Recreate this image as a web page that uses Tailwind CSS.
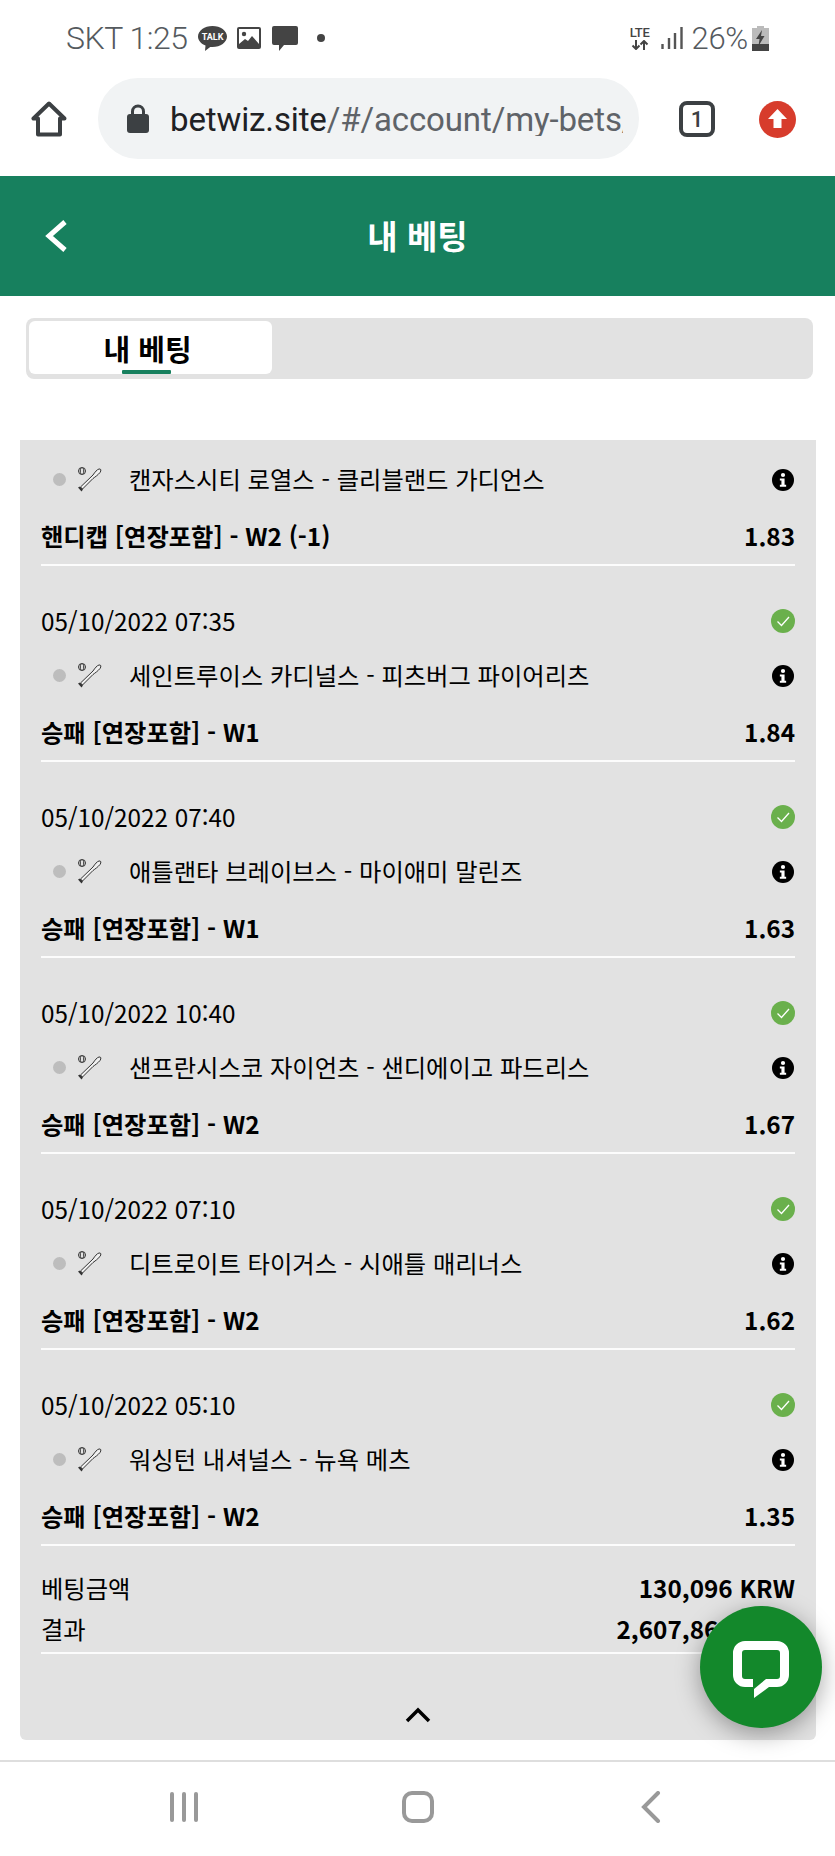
<!DOCTYPE html>
<html lang="ko">
<head>
  <meta charset="UTF-8" />
  <meta name="viewport" content="width=device-width, initial-scale=1.0" />
  <title>내 베팅</title>
  <script src="https://cdn.jsdelivr.net/npm/@tailwindcss/browser@4"></script>
</head>
<body class="relative w-[835px] h-[1856px] overflow-hidden bg-white text-black font-['Noto_Sans_CJK_KR',sans-serif]">

  <!-- status bar -->
  <div class="h-[78px] flex items-center pl-[66px] pr-[66px] pb-[2px] text-[#555a5e] font-['Roboto',sans-serif]">
    <span class="text-[32px] leading-none font-light tracking-[-0.5px] w-[132px]">SKT 1:25</span>
    <svg class="w-[29px] h-[25px]" viewBox="0 0 29 25"><path fill="#444" d="M14.500 0C22.500 0 29 4.700 29 10.500S22.500 21 14.500 21c-.8 0-1.500 0-2.300-.1L7 25l.5-5.400C3 17.800 0 14.400 0 10.500 0 4.700 6.500 0 14.500 0z"/><text x="14.500" y="14" text-anchor="middle" font-size="9" font-weight="700" fill="#fff" font-family="Roboto">TALK</text></svg>
    <svg class="w-[24px] h-[22px] ml-[10px]" viewBox="0 0 24 22"><rect width="24" height="22" rx="2" fill="#444"/><rect x="2" y="2" width="20" height="15" fill="#fff"/><circle cx="7" cy="7" r="2.200" fill="#444"/><path fill="#444" d="M2 17l6-5 3 2 4-5 7 8z"/></svg>
    <svg class="w-[26px] h-[25px] ml-[11px]" viewBox="0 0 26 25"><path fill="#444" d="M2 0h22a2 2 0 0 1 2 2v15a2 2 0 0 1-2 2H12l-5 6v-6H2a2 2 0 0 1-2-2V2a2 2 0 0 1 2-2z"/></svg>
    <span class="w-[8px] h-[8px] rounded-full bg-[#444] ml-[19px]"></span>
    <div class="ml-auto flex items-center">
      <div class="w-[24px] h-[24px] flex flex-col items-center justify-between text-[#444]">
        <span class="text-[13px] leading-[13px] font-medium tracking-[-0.3px]">LTE</span>
        <svg class="w-[18px] h-[10px]" viewBox="0 0 18 10"><path fill="none" stroke="#444" stroke-width="2" d="M5 0v9M1.500 5.500L5 9l3.500-3.500M13 10V1M9.500 4.500L13 1l3.500 3.500"/></svg>
      </div>
      <svg class="w-[22px] h-[22px] ml-[9px]" viewBox="0 0 22 22"><path stroke="#555" stroke-width="2.400" d="M1.500 17v5M8 11v11M14 6v16M20.500 0v22"/></svg>
      <span class="text-[31px] leading-none font-light ml-[9px] tracking-[-0.3px]">26%</span>
      <svg class="w-[17px] h-[25px] ml-[4px]" viewBox="0 0 17 25"><path fill="#bbb" d="M5 0h7v2h5v16H0V2h5z"/><rect y="18" width="17" height="7" fill="#444"/><path fill="#444" d="M10 4L4 13h3.500l-1 7 6-10H9z"/></svg>
    </div>
  </div>

  <!-- browser address bar -->
  <div class="h-[98px] flex items-start">
    <svg class="w-[36px] h-[36px] ml-[31px] mt-[23px]" viewBox="0 0 36 36"><path fill="none" stroke="#3c4043" stroke-width="4" d="M18 2.500L2.500 17.500H7V33.500H29V17.500H33.500z" stroke-linejoin="round"/></svg>
    <div class="ml-[31px] w-[541px] h-[81px] rounded-[40px] bg-[#f1f3f4] flex items-center pl-[29px] overflow-hidden">
      <svg class="w-[22px] h-[29px] shrink-0" viewBox="0 0 22 29"><path fill="none" stroke="#3c4043" stroke-width="3" d="M5.500 12V7.500a5.500 5.500 0 0 1 11 0V12"/><rect y="10" width="22" height="19" rx="3" fill="#3c4043"/></svg>
      <div class="ml-[21px] w-[453px] overflow-hidden whitespace-nowrap text-[33px] leading-none tracking-[-0.12px] font-['Roboto',sans-serif] text-[#5f6368] pt-[2px]"><span class="text-[#202124]">betwiz.site</span>/#/account/my-bets/</div>
    </div>
    <div class="ml-[40px] mt-[23px] w-[36px] h-[36px] rounded-[8px] border-[4px] border-[#3c4043] flex items-center justify-center text-[22px] font-medium font-['Roboto',sans-serif] text-[#3c4043]">1</div>
    <svg class="w-[37px] h-[37px] ml-[44px] mt-[23px]" viewBox="0 0 37 37"><circle cx="18.500" cy="18.500" r="18.500" fill="#d73c2c"/><path fill="#fff" d="M18.500 8L28 18h-5.500v9h-8v-9H9z"/></svg>
  </div>

  <!-- page header -->
  <header class="h-[120px] bg-[#17805e] relative flex items-center justify-center">
    <svg class="absolute left-[43px] top-[42px] w-[26px] h-[36px]" viewBox="0 0 26 36"><path fill="none" stroke="#fff" stroke-width="5" d="M22 4L6 18l16 14"/></svg>
    <h1 class="text-[33px] font-bold text-white">내 베팅</h1>
  </header>

  <!-- tabs -->
  <div class="mt-[22px] mx-[26px] w-[787px] h-[61px] rounded-[8px] bg-[#e2e2e2] p-[3px] pb-[5px]">
    <div class="relative w-[243px] h-[53px] rounded-[6px] bg-white flex items-center justify-center pr-[6px] pt-[2px] text-[29px] font-bold">
      내 베팅
      <span class="absolute bottom-0 left-[93px] w-[49px] h-[4px] rounded-[1px] bg-[#17805e]"></span>
    </div>
  </div>

  <!-- bet card -->
  <div id="bet-card" class="mt-[61px] mx-[20px] w-[796px] h-[1300px] rounded-b-[6px] bg-[#e2e2e2] px-[21px] pt-[5px] text-[24.300px]">
    <div id="bet-rows"></div>
    <div class="pt-[22px] h-[108px] border-b-2 border-white/90">
      <div class="h-[41px] flex items-center justify-between"><span>베팅금액</span><b class="font-bold">130,096 KRW</b></div>
      <div class="h-[41px] flex items-center justify-between"><span>결과</span><b class="font-bold">2,607,862 KRW</b></div>
    </div>
    <div class="flex justify-center pt-[53px]">
      <svg class="w-[26px] h-[16px]" viewBox="0 0 26 16"><path fill="none" stroke="#000" stroke-width="3.500" d="M2 14L13 3l11 11"/></svg>
    </div>
  </div>

  <!-- bottom navigation -->
  <nav class="absolute bottom-0 left-0 w-full h-[96px] border-t-2 border-[#dedede] bg-white flex items-center pb-[4px]">
    <div class="ml-[170px] w-[28px] h-[30px] flex justify-between">
      <span class="w-[4px] h-full rounded-full bg-[#999]"></span>
      <span class="w-[4px] h-full rounded-full bg-[#999]"></span>
      <span class="w-[4px] h-full rounded-full bg-[#999]"></span>
    </div>
    <span class="ml-[204px] w-[32px] h-[32px] rounded-[10px] border-[4px] border-[#999]"></span>
    <svg class="ml-[207px] w-[20px] h-[32px]" viewBox="0 0 20 32"><path fill="none" stroke="#999" stroke-width="4" stroke-linecap="round" d="M17 2L3 16l14 14"/></svg>
  </nav>

  <!-- live chat button -->
  <div class="absolute left-[700px] top-[1606px] w-[122px] h-[122px] rounded-full bg-[#13882b] shadow-[0_6px_24px_rgba(0,0,0,0.35)] flex items-center justify-center">
    <svg class="w-[56px] h-[57px] mt-[5px]" viewBox="0 0 56 57"><path fill="#fff" d="M12 0H44A12 12 0 0 1 56 12V34A12 12 0 0 1 44 46H36L21 57V48L33 38H44a3 3 0 0 0 3-3V12a3 3 0 0 0-3-3H12a3 3 0 0 0-3 3V35a3 3 0 0 0 3 3H20V46H12A12 12 0 0 1 0 34V12A12 12 0 0 1 12 0Z"/></svg>
  </div>

  <script>
    const bets = [
      { date: '', match: '캔자스시티 로열스 - 클리블랜드 가디언스', market: '핸디캡 [연장포함] - W2 (-1)', odds: '1.83' },
      { date: '05/10/2022 07:35', match: '세인트루이스 카디널스 - 피츠버그 파이어리츠', market: '승패 [연장포함] - W1', odds: '1.84' },
      { date: '05/10/2022 07:40', match: '애틀랜타 브레이브스 - 마이애미 말린즈', market: '승패 [연장포함] - W1', odds: '1.63' },
      { date: '05/10/2022 10:40', match: '샌프란시스코 자이언츠 - 샌디에이고 파드리스', market: '승패 [연장포함] - W2', odds: '1.67' },
      { date: '05/10/2022 07:10', match: '디트로이트 타이거스 - 시애틀 매리너스', market: '승패 [연장포함] - W2', odds: '1.62' },
      { date: '05/10/2022 05:10', match: '워싱턴 내셔널스 - 뉴욕 메츠', market: '승패 [연장포함] - W2', odds: '1.35' }
    ];

    const batIcon = `<svg class="ml-[11px] w-[25px] h-[25px] shrink-0" viewBox="0 0 25 25">
      <circle cx="5" cy="4" r="3.500" fill="none" stroke="#333" stroke-width="1"/><path fill="none" stroke="#333" stroke-width="1" d="M4 1c-1 2-1 4 0 6M6 1c1 2 1 4 0 6"/>
      <path fill="#f0f0f0" stroke="#333" stroke-width="1" d="M3.500 20L16 8C18 5 20 2.500 22 2c2-.5 2.500 1.500 1 3.500-2 2.500-5 4.500-7 6L5.500 22z"/><path fill="#333" d="M1 20.500l2-1 3 3-1.500 2z"/></svg>`;

    const checkIcon = `<svg class="w-[24px] h-[24px]" viewBox="0 0 24 24"><circle cx="12" cy="12" r="12" fill="#6ab04c"/><path fill="none" stroke="#fff" stroke-width="1.300" d="M6.500 12.500l4 4 7.500-8.500"/></svg>`;

    const infoIcon = `<svg class="w-[22px] h-[22px] mr-[1px] shrink-0" viewBox="0 0 21 21"><circle cx="10.500" cy="10.500" r="10.500" fill="#000"/><circle cx="10.500" cy="5.700" r="2" fill="#fff"/><path fill="#fff" d="M7.500 9h4.500v6h1.500v2h-6v-2H9v-4H7.500z"/></svg>`;

    document.getElementById('bet-rows').innerHTML = bets.map(bet => `
      <div class="${bet.date ? 'pt-[35px]' : ''} pb-[6px] border-b-2 border-white/90">
        ${bet.date ? `<div class="h-[40px] flex items-center justify-between"><span>${bet.date}</span>${checkIcon}</div>` : ''}
        <div class="h-[69px] flex items-center pl-[12px]">
          <span class="w-[13px] h-[13px] rounded-full bg-[#bdbdbd] shrink-0"></span>
          ${batIcon}
          <span class="ml-[27px] whitespace-nowrap">${bet.match}</span>
          <span class="ml-auto">${infoIcon}</span>
        </div>
        <div class="h-[44px] flex items-center justify-between font-bold"><span>${bet.market}</span><span>${bet.odds}</span></div>
      </div>
    `).join('');
  </script>
</body>
</html>
